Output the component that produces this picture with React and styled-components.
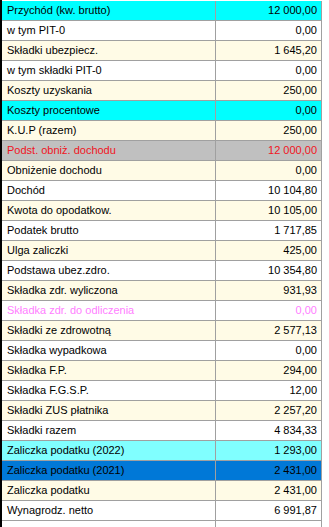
import React from 'react';
import styled, { createGlobalStyle } from 'styled-components';

const GlobalStyle = createGlobalStyle`
  html, body {
    margin: 0;
    padding: 0;
    background: #fff;
  }
  body {
    font-family: "Liberation Sans", Arial, sans-serif;
  }
`;

const backgrounds = {
  cyan: '#00ffff',
  light: '#80ffff',
  cream: '#fffbe6',
  white: '#ffffff',
  gray: '#c0c0c0',
  blue: '#0078d7',
};

const Grid = styled.div`
  display: flex;
  flex-direction: column;
  height: 527px;
  box-sizing: border-box;
  padding-top: 1px;
  border-left: 2px solid #000;
  overflow: hidden;
`;

const Row = styled.div`
  display: grid;
  grid-template-columns: 214px 106px;
  height: 20px;
  flex: none;
  font-size: 11px;
  line-height: 19px;
  color: ${({ tone }) => tone || '#000'};
`;

const Cell = styled.div`
  box-sizing: border-box;
  height: 20px;
  padding: 0 4px 0 5px;
  background: ${({ bg }) => backgrounds[bg] || '#fff'};
  border-right: 1px solid #a0a0a0;
  border-bottom: 1px solid #a0a0a0;
  white-space: nowrap;
  overflow: hidden;
  text-align: ${({ right }) => (right ? 'right' : 'left')};
`;

const Filler = styled.div`
  flex: 1;
  display: grid;
  grid-template-columns: 214px 106px;

  div {
    border-right: 1px solid #a0a0a0;
  }
`;

const rows = [
  ['Przychód (kw. brutto)', '12 000,00', 'cyan'],
  ['w tym PIT-0', '0,00', 'white'],
  ['Składki ubezpiecz.', '1 645,20', 'cream'],
  ['w tym składki PIT-0', '0,00', 'white'],
  ['Koszty uzyskania', '250,00', 'cream'],
  ['Koszty procentowe', '0,00', 'cyan'],
  ['K.U.P (razem)', '250,00', 'cream'],
  ['Podst. obniż. dochodu', '12 000,00', 'gray', '#f0141e'],
  ['Obniżenie dochodu', '0,00', 'cream'],
  ['Dochód', '10 104,80', 'white'],
  ['Kwota do opodatkow.', '10 105,00', 'cream'],
  ['Podatek brutto', '1 717,85', 'white'],
  ['Ulga zaliczki', '425,00', 'cream'],
  ['Podstawa ubez.zdro.', '10 354,80', 'white'],
  ['Składka zdr. wyliczona', '931,93', 'cream'],
  ['Składka zdr. do odliczenia', '0,00', 'white', '#ff80ff'],
  ['Składki ze zdrowotną', '2 577,13', 'cream'],
  ['Składka wypadkowa', '0,00', 'white'],
  ['Składka F.P.', '294,00', 'cream'],
  ['Składka F.G.S.P.', '12,00', 'white'],
  ['Składki ZUS płatnika', '2 257,20', 'cream'],
  ['Składki razem', '4 834,33', 'white'],
  ['Zaliczka podatku (2022)', '1 293,00', 'light'],
  ['Zaliczka podatku (2021)', '2 431,00', 'blue'],
  ['Zaliczka podatku', '2 431,00', 'cream'],
  ['Wynagrodz. netto', '6 991,87', 'white'],
];

export default function App() {
  return (
    <>
      <GlobalStyle />
      <Grid>
        {rows.map(([label, value, bg, tone]) => (
          <Row key={label} tone={tone}>
            <Cell bg={bg}>{label}</Cell>
            <Cell bg={bg} right>{value}</Cell>
          </Row>
        ))}
        <Filler>
          <div />
          <div />
        </Filler>
      </Grid>
    </>
  );
}
